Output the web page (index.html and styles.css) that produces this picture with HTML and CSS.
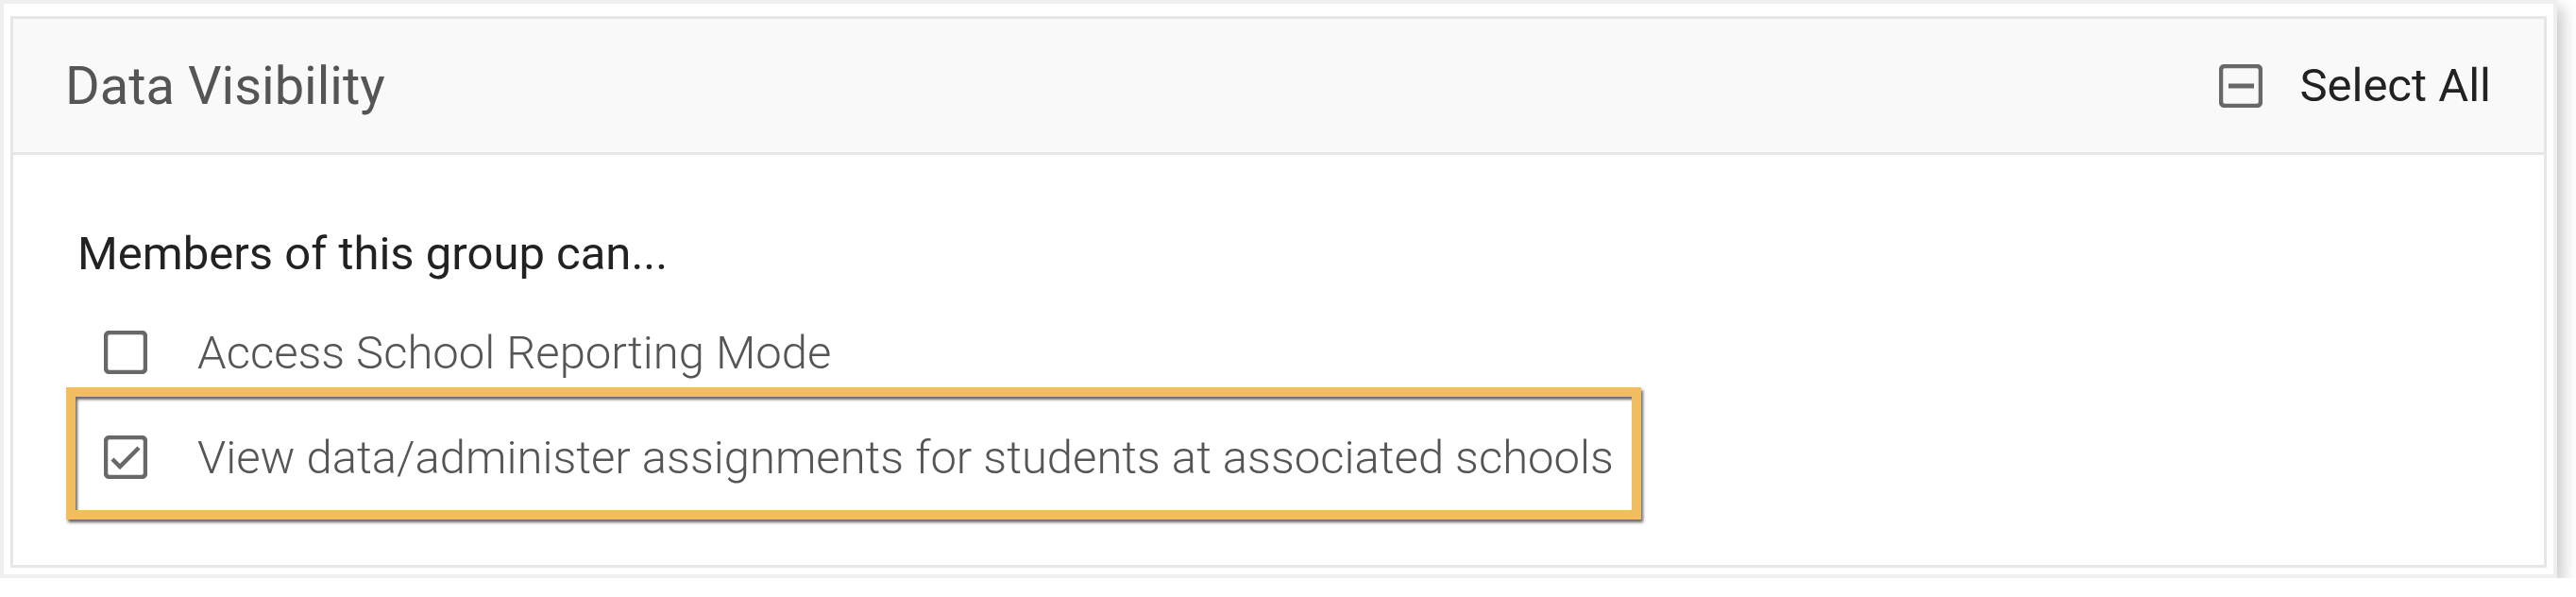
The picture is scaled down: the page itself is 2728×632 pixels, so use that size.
FILE: index.html
```html
<!DOCTYPE html>
<html lang="en">
<head>
    <meta charset="UTF-8">
    <meta name="viewport" content="width=device-width, initial-scale=1.0">
    <title>Data Visibility</title>
    <link rel="stylesheet" href="styles.css">
</head>
<body>

    <div class="frame">
        <div class="panel">
            <div class="panel-header">
                <h2 class="panel-title">Data Visibility</h2>
                <label class="select-all">
                    <svg class="box-icon" viewBox="0 0 46 46">
                        <rect x="2" y="2" width="42" height="42" rx="4" />
                        <line x1="10" y1="23" x2="37" y2="23" class="minus" />
                    </svg>
                    <span>Select All</span>
                </label>
            </div>

            <div class="panel-body">
                <p class="lead">Members of this group can...</p>
                <div class="options">
                    <label class="option">
                        <svg class="box-icon" viewBox="0 0 46 46">
                            <rect x="2" y="2" width="42" height="42" rx="4" />
                        </svg>
                        <span>Access School Reporting Mode</span>
                    </label>
                    <label class="option checked">
                        <svg class="box-icon" viewBox="0 0 46 46">
                            <rect x="2" y="2" width="42" height="42" rx="4" />
                            <path d="M9 25 L17 33 L37 13" class="tick" />
                        </svg>
                        <span>View data/administer assignments for students at associated schools</span>
                        <!-- annotation box round the option -->
                        <span class="highlight"></span>
                    </label>
                </div>
            </div>
        </div>
    </div>

</body>
</html>
```

FILE: styles.css
```css
body {
    margin: 0;
    background-color: #fff;
    font-family: Roboto, "Liberation Sans", sans-serif;
}

/* outer screenshot frame */
.frame {
    width: 2708px;
    box-sizing: border-box;
    border: 4px solid #efefef;
    background-color: #fff;
    padding: 13px 7px 7px 7px;
    box-shadow: 6px 8px 16px rgba(0, 0, 0, 0.22);
}

.panel {
    border: 3px solid #e6e6e6;
}

.panel-header {
    height: 141px;
    display: flex;
    align-items: center;
    justify-content: space-between;
    padding: 0 56px 0 55px;
    background-color: #f9f9f9;
    border-bottom: 3px solid #e6e6e6;
}

.panel-title {
    margin: 0;
    font-size: 56px;
    font-weight: 400;
    color: #555;
}

.select-all {
    display: flex;
    align-items: center;
    gap: 39px;
    font-size: 49px;
    color: #222;
}

.box-icon {
    width: 46px;
    height: 46px;
    flex-shrink: 0;
}

.box-icon rect {
    fill: none;
    stroke: #686868;
    stroke-width: 4.5;
}

.box-icon .minus {
    stroke: #686868;
    stroke-width: 5;
}

.box-icon .tick {
    fill: none;
    stroke: #686868;
    stroke-width: 4.5;
}

.panel-body {
    height: 434px;
    box-sizing: border-box;
    padding: 77px 68px 0 68px;
}

.lead {
    margin: 0 0 48px 0;
    font-size: 49px;
    line-height: 56px;
    color: #222;
}

.options {
    display: flex;
    flex-direction: column;
    align-items: flex-start;
    gap: 55px;
}

.option {
    position: relative;
    display: flex;
    align-items: center;
    gap: 53px;
    height: 56px;
    padding-left: 28px;
    font-size: 49px;
    font-weight: 300;
    color: #555;
}

/* orange annotation with its drop shadow */
.highlight {
    position: absolute;
    left: -12px;
    right: -29px;
    top: -46px;
    bottom: -38px;
    border: 10px solid #f1bd5e;
    box-shadow: 2px 3px 3px rgba(0, 0, 0, 0.6), inset 2px 3px 3px rgba(0, 0, 0, 0.6);
}
```
